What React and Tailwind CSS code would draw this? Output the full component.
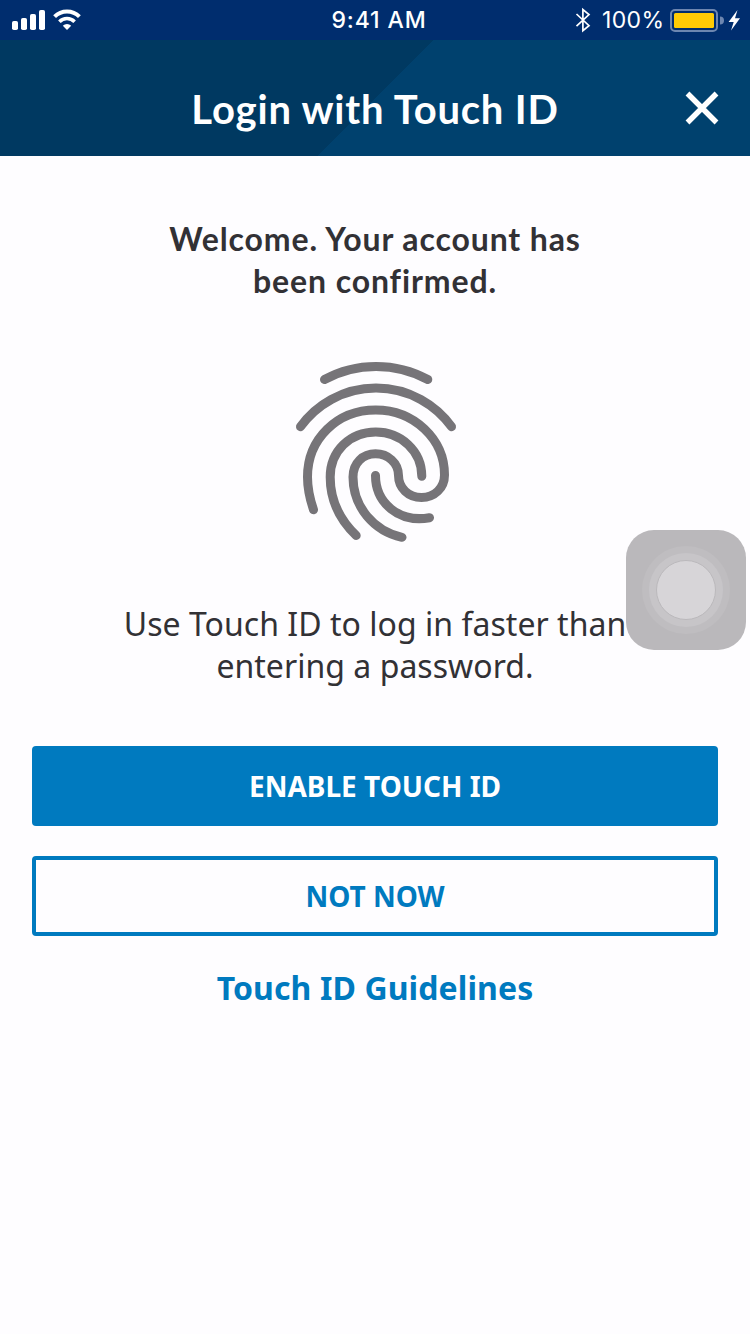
function StatusBar() {
  return (
    <div className="flex h-10 items-center bg-[#002d6e] text-white">
      <div className="w-[240px]">
        <svg className="block h-10 w-[120px]" viewBox="0 0 120 40" fill="#fff">
          <rect x="12" y="21" width="6" height="9" rx="1.8" />
          <rect x="21" y="18" width="6" height="12" rx="1.8" />
          <rect x="30" y="14" width="6" height="16" rx="1.8" />
          <rect x="39" y="10" width="6" height="20" rx="1.8" />
          <path d="M67 30 L62.8 25.8 A6 6 0 0 1 71.2 25.8Z" />
          <path d="M54.6 17.2 A17.5 17.5 0 0 1 79.4 17.2" fill="none" stroke="#fff" strokeWidth="4" transform="translate(0 -.5)" />
          <path d="M59.4 22 A10.7 10.7 0 0 1 74.6 22" fill="none" stroke="#fff" strokeWidth="3.6" transform="translate(0 -.3)" />
        </svg>
      </div>
      <div className="flex-1 pl-[8px] text-center font-['Inter',sans-serif] text-[23px] leading-10 font-medium tracking-[0.9px]">
        <span>9:41 AM</span>
      </div>
      <div className="flex w-[240px] items-center justify-end">
        <svg className="h-10 w-7" viewBox="0 0 28 40" fill="none" stroke="#fff" strokeWidth="1.7">
          <path d="M11.5 14 L24 25.6 L17.9 30.6 V9.6 L24 14.6 L11.5 26.2" />
        </svg>
        <span className="ml-[9px] w-[67px] font-['Inter',sans-serif] text-[23px] leading-10 tracking-[0.35px]">100%</span>
        <svg className="h-10 w-[81px]" viewBox="669 0 81 40">
          <rect x="671" y="10" width="46" height="21" rx="4" fill="none" stroke="#6d86b0" strokeWidth="2" />
          <rect x="674" y="13" width="40" height="15" rx="1.5" fill="#ffcb05" />
          <path d="M720 16.5 A4 4 0 0 1 720 24.5Z" fill="#6d86b0" />
          <path d="M737.5 10 L728.6 22 H733.7 L731 30.5 L740 18.3 H735Z" fill="#fff" />
        </svg>
      </div>
    </div>
  );
}

function Fingerprint() {
  return (
    <svg
      className="mx-auto mt-12 block h-[200px] w-[190px]"
      viewBox="0 0 190 200"
      fill="none"
      stroke="#767478"
      strokeWidth="9"
      strokeLinecap="round"
    >
      <path d="M44.5 29.5 C76 12 116 12 147.8 29.5" />
      <path d="M20.5 76.7 A93 93 0 0 1 171.5 76.7" />
      <path d="M33.5 159.7 C29.5 148 27.5 138 27.5 127 C27.5 89 57 60 95.7 60 C134 60 164.5 89 164.5 125 C164.5 138 154.5 147.5 141.5 147.5 C128.5 147.5 118.5 138 118.5 125.5 C118.5 113 108 103.8 95.5 103.8 C83 103.8 73 113 73 127 C73 157 94 181 122 187.3" />
      <path d="M141.8 126.2 C141.8 101 121 82 95.7 82 C70 82 50.2 101 50.2 127 C50.2 151 61 171 76.2 185.5" />
      <path d="M95.5 125.5 C95.5 153 119 173 149.5 167.7" />
    </svg>
  );
}

export default function App() {
  return (
    <main className="relative h-[1334px] w-[750px] overflow-hidden bg-[#fefdff] font-['Noto_Sans',sans-serif] text-[#323135]">
      <StatusBar />
      <header className="flex h-[116px] items-center bg-[linear-gradient(135deg,#003961_50%,#00416e_50%)] bg-[length:750px_116px] pt-[22px] text-white">
        <div className="w-20" />
        <h1 className="flex-1 text-center font-['Lato',sans-serif] text-[40px] leading-[48px] font-bold tracking-[0.8px]">
          <span>Login with Touch ID</span>
        </h1>
        <button className="flex w-20 justify-start pl-[15px]" aria-label="Close">
          <svg className="h-9 w-9" viewBox="0 0 36 36" stroke="#fff" strokeWidth="5.4">
            <path d="M2.5 2.5 L31.5 31.5 M31.5 2.5 L2.5 31.5" />
          </svg>
        </button>
      </header>

      <h2 className="mt-[62px] text-center font-['Lato',sans-serif] text-[32px] leading-[42px] font-bold tracking-[0.88px]">
        <span>Welcome. Your account has</span>
        <br />
        <span>been confirmed.</span>
      </h2>

      <Fingerprint />

      <p className="mt-[53px] text-center text-[32px] leading-[42px] tracking-[0.03px]">
        Use Touch ID to log in faster than
        <br />
        entering a password.
      </p>

      <div className="mt-[59px] flex flex-col gap-[30px] px-8">
        <button className="h-20 rounded-[4px] bg-[#007abf] text-[28px] leading-10 font-bold text-white">ENABLE TOUCH ID</button>
        <button className="h-20 rounded-[4px] border-4 border-[#007abf] text-[28px] leading-10 font-bold text-[#007abf]">NOT NOW</button>
      </div>
      <div className="mt-[30px] text-center text-[32px] leading-[44px] font-bold tracking-[0.1px] text-[#007abf]">
        <a>Touch ID Guidelines</a>
      </div>

      <div className="absolute top-[530px] left-[626px] flex h-[120px] w-[120px] items-center justify-center rounded-[28px] bg-[#bab8bb]">
        <div className="flex h-[88px] w-[88px] items-center justify-center rounded-full bg-[#bfbdc0]">
          <div className="flex h-[74px] w-[74px] items-center justify-center rounded-full bg-[#c7c5c8]">
            <div className="h-[60px] w-[60px] rounded-full border border-[#bbb9bc] bg-[#d7d5d8]" />
          </div>
        </div>
      </div>
    </main>
  );
}
